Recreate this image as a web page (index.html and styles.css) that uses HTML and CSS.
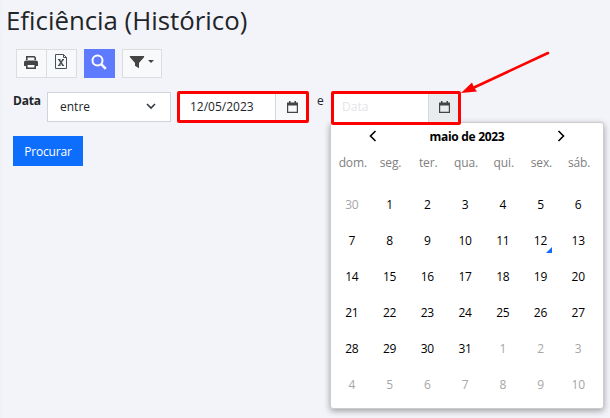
FILE: index.html
```html
<!DOCTYPE html>
<html lang="pt-BR">

<head>
  <meta charset="UTF-8">
  <title>Eficiência (Histórico)</title>
  <link rel="stylesheet" href="styles.css">
</head>

<body>
  <h1 class="page-title">Eficiência (Histórico)</h1>

  <!-- Toolbar -->
  <div class="toolbar">
    <div class="btn-group">
      <button class="tool-button" aria-label="Imprimir">
        <svg width="14" height="14" viewBox="0 0 14 14" fill="#444">
          <path d="M2.800 5V1.800h7.400l1 1V5" fill="none" stroke="#444" stroke-width="1.600" />
          <path d="M2 5.500h10a2 2 0 0 1 2 2V11h-2V9H2v2H0V7.500a2 2 0 0 1 2-2z" />
          <path d="M2.800 9.200h8.400v4H2.800z" fill="#f8f9fa" stroke="#444" stroke-width="1.600" />
        </svg>
      </button>
      <button class="tool-button" aria-label="Excel">
        <svg width="14" height="15" viewBox="0 0 14 15" fill="none" stroke="#4b5055">
          <path d="M1.500.500h8l3 3v11h-11zM9.500.500v3h3" />
          <path d="M5 5.500l4 6M9 5.500l-4 6" stroke-width="1.500" />
          <path d="M4 5.500h2.500M8 5.500h2M4 11.500h2.500M8 11.500h2" />
        </svg>
      </button>
    </div>
    <button class="tool-button search-button" aria-label="Pesquisar">
      <svg width="16" height="16" viewBox="0 0 16 16" fill="none" stroke="#fff" stroke-width="2">
        <circle cx="6.500" cy="6.500" r="5" />
        <path d="M10.200 10.200l4.600 4.600" stroke-width="2.500" />
      </svg>
    </button>
    <button class="tool-button filter-button" aria-label="Filtrar">
      <svg width="16" height="14" viewBox="0 0 16 14" fill="#444">
        <path d="M1.200 1h13.600q.8.400.2 1.200L10 8v5.300L6 10.800V8L1 2.200Q.4 1.400 1.200 1z" />
      </svg>
      <span class="caret"></span>
    </button>
  </div>

  <!-- Search form -->
  <div class="filter-row">
    <label class="filter-label">Data</label>
    <div class="select">
      <span>entre</span>
      <svg width="10" height="7" viewBox="0 0 10 7" fill="none" stroke="#343a40" stroke-width="1.600">
        <path d="M1 1l4 4 4-4" />
      </svg>
    </div>
    <div class="date-group first">
      <span class="date-value">12/05/2023</span>
      <span class="date-button">
        <svg width="11" height="12" viewBox="0 0 11 12" fill="#444">
          <path d="M2 0h1.500v2H2zM7.500 0H9v2H7.500zM0 1.500h11v3H0z" />
          <path d="M.6 2.500h9.800v8.800H.6z" fill="none" stroke="#444" stroke-width="1.200" />
        </svg>
      </span>
    </div>
    <span class="and-text">e</span>
    <div class="date-group second">
      <span class="date-value placeholder">Data</span>
      <span class="date-button">
        <svg width="11" height="12" viewBox="0 0 11 12" fill="#444">
          <path d="M2 0h1.500v2H2zM7.500 0H9v2H7.500zM0 1.500h11v3H0z" />
          <path d="M.6 2.500h9.800v8.800H.6z" fill="none" stroke="#444" stroke-width="1.200" />
        </svg>
      </span>

      <!-- Calendar popup -->
      <div class="calendar">
        <div class="calendar-header">
          <svg width="8" height="12" viewBox="0 0 8 12" fill="none" stroke="#000" stroke-width="1.600">
            <path d="M6.500 1L1.500 6l5 5" />
          </svg>
          <span class="calendar-title">maio de 2023</span>
          <svg width="8" height="12" viewBox="0 0 8 12" fill="none" stroke="#000" stroke-width="1.600">
            <path d="M1.500 1l5 5-5 5" />
          </svg>
        </div>
        <div class="weekdays">
          <span>dom.</span><span>seg.</span><span>ter.</span><span>qua.</span><span>qui.</span><span>sex.</span><span>sáb.</span>
        </div>
        <div class="days">
          <span class="muted">30</span><span>1</span><span>2</span><span>3</span><span>4</span><span>5</span><span>6</span>
          <span>7</span><span>8</span><span>9</span><span>10</span><span>11</span><span class="today">12</span><span>13</span>
          <span>14</span><span>15</span><span>16</span><span>17</span><span>18</span><span>19</span><span>20</span>
          <span>21</span><span>22</span><span>23</span><span>24</span><span>25</span><span>26</span><span>27</span>
          <span>28</span><span>29</span><span>30</span><span>31</span><span class="muted">1</span><span class="muted">2</span><span class="muted">3</span>
          <span class="muted">4</span><span class="muted">5</span><span class="muted">6</span><span class="muted">7</span><span class="muted">8</span><span class="muted">9</span><span class="muted">10</span>
        </div>
      </div>

      <!-- Arrow pointing at the end date -->
      <svg class="arrow" width="90" height="46" viewBox="0 0 90 46">
        <path d="M87 3L12 38" stroke="#f00" stroke-width="2.600" stroke-linecap="round" />
        <path d="M0 43L11 32.500l2 5 3 4z" fill="#f00" />
      </svg>
    </div>
  </div>

  <button class="submit-button">Procurar</button>
</body>

</html>
```

FILE: styles.css
```css
* {
  box-sizing: border-box;
}

body {
  margin: 0;
  height: 418px;
  overflow: hidden;
  background: linear-gradient(to right, #f0f2f6 3px, #f3f4f9 3px);
  font-family: "Open Sans", sans-serif;
  font-size: 12px;
  color: #212529;
}

button {
  font-family: inherit;
  font-size: inherit;
}

svg {
  display: block;
  flex: none;
}

.page-title {
  margin: 0;
  padding: 3px 0 0 6px;
  height: 49px;
  font-size: 25.800px;
  font-weight: 400;
  line-height: 34px;
}

.toolbar {
  display: flex;
  gap: 7px;
  padding-left: 16px;
}

.btn-group {
  display: flex;
}

.tool-button {
  display: flex;
  align-items: center;
  justify-content: center;
  width: 31px;
  height: 29px;
  padding: 0 1px 4px 0;
  background-color: #f8f9fa;
  border: 1px solid #dcdddf;
}

.btn-group .tool-button + .tool-button {
  margin-left: -1px;
}

.search-button {
  background-color: #5e7bff;
  border-color: #5e7bff;
}

.filter-button {
  width: 40px;
  gap: 3px;
}

.caret {
  border-top: 3px solid #444;
  border-left: 3px solid transparent;
  border-right: 3px solid transparent;
}

.filter-row {
  display: flex;
  margin-top: 13px;
  height: 34px;
}

.filter-label {
  width: 47px;
  padding-left: 13px;
  line-height: 20px;
  font-weight: 700;
  letter-spacing: -0.200px;
}

.select {
  display: flex;
  align-items: center;
  justify-content: space-between;
  width: 124px;
  height: 30px;
  margin: 1px 6px 0 0;
  padding: 0 14px 1px 12px;
  background-color: #fff;
  border: 1px solid #ced4da;
}

.date-group {
  position: relative;
  display: flex;
  background-color: #fff;
  border: 3px solid #f00;
  border-radius: 2px;
}

.first {
  width: 132px;
  height: 32px;
}

.second {
  width: 130px;
  height: 34px;
}

.date-value {
  flex: 1;
  padding-left: 10px;
  line-height: 26px;
}

.second .date-value {
  padding-left: 8px;
}

.placeholder {
  color: #e4e5e7;
}

.date-button {
  display: flex;
  justify-content: center;
  width: 31px;
  padding: 7px 0 0 2px;
  background-color: #f8f9fa;
  border-left: 1px solid #d5d8dc;
}

.second .date-button {
  width: 30px;
  background-color: #e9ecef;
}

.and-text {
  width: 22px;
  padding-left: 8px;
  line-height: 20px;
}

.calendar {
  position: absolute;
  top: 28px;
  left: -4px;
  z-index: -1;
  width: 274px;
  height: 287px;
  padding: 0 6px 0 2px;
  background-color: #fff;
  border: 1px solid #ccc;
  border-radius: 3px;
  box-shadow: 0 2px 6px rgba(0, 0, 0, 0.35);
  color: #000;
}

.calendar-header {
  display: flex;
  align-items: center;
  justify-content: space-between;
  height: 26px;
  padding: 0 32px 0 36px;
}

.calendar-title {
  font-weight: 700;
  letter-spacing: -0.300px;
}

.weekdays,
.days {
  display: grid;
  grid-template-columns: repeat(7, 1fr);
  text-align: center;
}

.weekdays {
  height: 38px;
  padding-left: 1px;
  margin-right: -1px;
  line-height: 28px;
  letter-spacing: -0.100px;
  color: #808080;
}

.days {
  grid-auto-rows: 36px;
  line-height: 36px;
  letter-spacing: -0.300px;
}

.days .muted {
  color: #a6a6a6;
}

.today {
  position: relative;
}

.today::after {
  content: "";
  position: absolute;
  right: 7px;
  bottom: 6px;
  border-left: 6px solid transparent;
  border-bottom: 6px solid #0d6efd;
}

.arrow {
  position: absolute;
  top: -44px;
  left: 127px;
}

.submit-button {
  display: block;
  width: 70px;
  height: 30px;
  margin: 11px 0 0 13px;
  padding: 0;
  background-color: #0d6efd;
  border: none;
  color: #fff;
  letter-spacing: -0.200px;
}
```
